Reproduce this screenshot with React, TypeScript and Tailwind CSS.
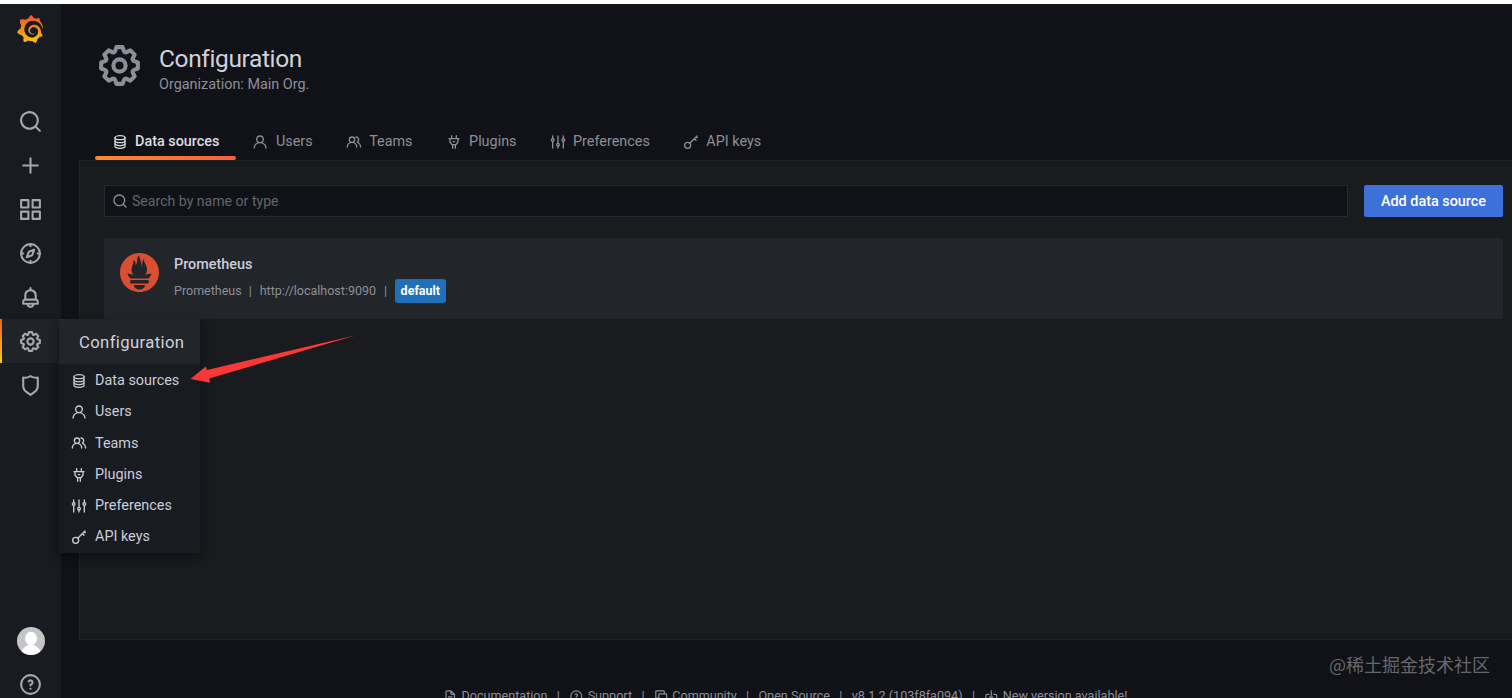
import type { ReactNode } from 'react';
import { SiGrafana, SiPrometheus } from 'react-icons/si';

type IconName =
  | 'search'
  | 'plus'
  | 'apps'
  | 'compass'
  | 'bell'
  | 'cog'
  | 'shield'
  | 'question'
  | 'database'
  | 'user'
  | 'users'
  | 'plug'
  | 'sliders'
  | 'key'
  | 'document'
  | 'comments'
  | 'update';

const icons: Record<IconName, ReactNode> = {
  search: (
    <path d="M21.71,20.29,18,16.61A9,9,0,1,0,16.61,18l3.68,3.68a1,1,0,0,0,1.42,0A1,1,0,0,0,21.71,20.29ZM11,18a7,7,0,1,1,7-7A7,7,0,0,1,11,18Z" />
  ),
  plus: <path d="M19,11H13V5a1,1,0,0,0-2,0v6H5a1,1,0,0,0,0,2h6v6a1,1,0,0,0,2,0V13h6a1,1,0,0,0,0-2Z" />,
  apps: (
    <path d="M10,13H3a1,1,0,0,0-1,1v7a1,1,0,0,0,1,1h7a1,1,0,0,0,1-1V14A1,1,0,0,0,10,13ZM9,20H4V15H9ZM21,2H14a1,1,0,0,0-1,1v7a1,1,0,0,0,1,1h7a1,1,0,0,0,1-1V3A1,1,0,0,0,21,2ZM20,9H15V4h5Zm1,4H14a1,1,0,0,0-1,1v7a1,1,0,0,0,1,1h7a1,1,0,0,0,1-1V14A1,1,0,0,0,21,13Zm-1,7H15V15h5ZM10,2H3A1,1,0,0,0,2,3v7a1,1,0,0,0,1,1h7a1,1,0,0,0,1-1V3A1,1,0,0,0,10,2ZM9,9H4V4H9Z" />
  ),
  compass: (
    <g fill="none" stroke="currentColor" strokeWidth="2" strokeLinecap="round" strokeLinejoin="round">
      <circle cx="12" cy="12" r="9" />
      <path d="M12 3v2M12 19v2M3 12h2M19 12h2" />
      <path d="M15.6 8.4l-2 5.2-5.2 2 2-5.2z" />
    </g>
  ),
  bell: (
    <path d="M18,13.18V10a6,6,0,0,0-5-5.91V3a1,1,0,0,0-2,0V4.09A6,6,0,0,0,6,10v3.18A3,3,0,0,0,4,16v2a1,1,0,0,0,1,1H8.14a4,4,0,0,0,7.72,0H19a1,1,0,0,0,1-1V16A3,3,0,0,0,18,13.18ZM8,10a4,4,0,0,1,8,0v3H8Zm4,10a2,2,0,0,1-1.72-1h3.44A2,2,0,0,1,12,20Zm6-3H6V16a1,1,0,0,1,1-1H17a1,1,0,0,1,1,1Z" />
  ),
  cog: (
    <path d="M21.32,9.55l-1.89-.63.89-1.78A1,1,0,0,0,20.13,6L18,3.87a1,1,0,0,0-1.15-.19l-1.78.89-.63-1.89A1,1,0,0,0,13.5,2h-3a1,1,0,0,0-.95.68L8.92,4.57,7.14,3.68A1,1,0,0,0,6,3.87L3.87,6a1,1,0,0,0-.19,1.15l.89,1.78-1.89.63A1,1,0,0,0,2,10.5v3a1,1,0,0,0,.68.95l1.89.63-.89,1.78A1,1,0,0,0,3.87,18L6,20.13a1,1,0,0,0,1.15.19l1.78-.89.63,1.89a1,1,0,0,0,.95.68h3a1,1,0,0,0,.95-.68l.63-1.89,1.78.89A1,1,0,0,0,18,20.13L20.13,18a1,1,0,0,0,.19-1.15l-.89-1.78,1.89-.63A1,1,0,0,0,22,13.5v-3A1,1,0,0,0,21.32,9.55ZM20,12.78l-1.2.4A2,2,0,0,0,17.64,16l.57,1.14-1.1,1.1L16,17.64a2,2,0,0,0-2.79,1.16l-.4,1.2H11.22l-.4-1.2A2,2,0,0,0,8,17.64l-1.14.57-1.1-1.1L6.36,16A2,2,0,0,0,5.2,13.18L4,12.78V11.22l1.2-.4A2,2,0,0,0,6.36,8L5.79,6.89l1.1-1.1L8,6.36A2,2,0,0,0,10.82,5.2l.4-1.2h1.56l.4,1.2A2,2,0,0,0,16,6.36l1.14-.57,1.1,1.1L17.64,8a2,2,0,0,0,1.16,2.79l1.2.4ZM12,8a4,4,0,1,0,4,4A4,4,0,0,0,12,8Zm0,6a2,2,0,1,1,2-2A2,2,0,0,1,12,14Z" />
  ),
  shield: (
    <path d="M19.63,3.65a1,1,0,0,0-.84-.2,8,8,0,0,1-6.22-1.27,1,1,0,0,0-1.14,0A8,8,0,0,1,5.21,3.45a1,1,0,0,0-.84.2A1,1,0,0,0,4,4.43v7.45a9,9,0,0,0,3.77,7.33l3.65,2.6a1,1,0,0,0,1.16,0l3.65-2.6A9,9,0,0,0,20,11.88V4.43A1,1,0,0,0,19.63,3.65ZM18,11.88a7,7,0,0,1-2.93,5.7L12,19.77,8.93,17.58A7,7,0,0,1,6,11.88V5.58a10,10,0,0,0,6-1.39,10,10,0,0,0,6,1.39Z" />
  ),
  question: (
    <path d="M11.29,15.29a1.58,1.58,0,0,0-.12.15.76.76,0,0,0-.09.18.64.64,0,0,0-.06.18,1.36,1.36,0,0,0,0,.2.84.84,0,0,0,.08.38.9.9,0,0,0,.54.54.94.94,0,0,0,.76,0,.9.9,0,0,0,.54-.54A1,1,0,0,0,13,16a1,1,0,0,0-.29-.71A1,1,0,0,0,11.29,15.29ZM12,2A10,10,0,1,0,22,12,10,10,0,0,0,12,2Zm0,18a8,8,0,1,1,8-8A8,8,0,0,1,12,20ZM12,7A3,3,0,0,0,9.4,8.5a1,1,0,1,0,1.73,1A1,1,0,0,1,12,9a1,1,0,0,1,0,2,1,1,0,0,0-1,1v1a1,1,0,0,0,2,0v-.18A3,3,0,0,0,12,7Z" />
  ),
  database: (
    <g fill="none" stroke="currentColor" strokeWidth="1.8" strokeLinecap="round">
      <ellipse cx="12" cy="5.5" rx="7.5" ry="3" />
      <path d="M4.5 5.5v13c0 1.6 3.3 3 7.5 3s7.5-1.4 7.5-3v-13" />
      <path d="M4.5 10c0 1.6 3.3 3 7.5 3s7.5-1.4 7.5-3M4.5 14.3c0 1.6 3.3 3 7.5 3s7.5-1.4 7.500-3" />
    </g>
  ),
  user: (
    <path d="M15.71,12.71a6,6,0,1,0-7.42,0,10,10,0,0,0-6.22,8.18,1,1,0,0,0,2,.22,8,8,0,0,1,15.9,0,1,1,0,0,0,1,.89h.11a1,1,0,0,0,.88-1.1A10,10,0,0,0,15.71,12.71ZM12,12a4,4,0,1,1,4-4A4,4,0,0,1,12,12Z" />
  ),
  users: (
    <path d="M12.3,12.22A4.92,4.92,0,0,0,14,8.5a5,5,0,0,0-10,0,4.92,4.92,0,0,0,1.7,3.72A8,8,0,0,0,1,19.5a1,1,0,0,0,2,0,6,6,0,0,1,12,0,1,1,0,0,0,2,0A8,8,0,0,0,12.3,12.22ZM9,11.5a3,3,0,1,1,3-3A3,3,0,0,1,9,11.5Zm9.74.32A5,5,0,0,0,15,3.5a1,1,0,0,0,0,2,3,3,0,0,1,3,3,3,3,0,0,1-1.5,2.59,1,1,0,0,0-.5.84,1,1,0,0,0,.45.86l.39.26.13.07a7,7,0,0,1,4,6.38,1,1,0,0,0,2,0A9,9,0,0,0,18.74,11.82Z" />
  ),
  plug: (
    <g fill="none" stroke="currentColor" strokeWidth="2" strokeLinecap="round" strokeLinejoin="round">
      <path d="M4.5 7h15M8.5 2.5V7M15.5 2.5V7M6 7v5l3 4h6l3-4V7M10 16v5.5M14 16v5.5M11 11.5h2" />
    </g>
  ),
  sliders: (
    <g fill="none" stroke="currentColor" strokeWidth="2" strokeLinecap="round">
      <path d="M4 3v4M4 11v10M12 3v11M12 18v3M20 3v4M20 11v10" />
      <circle cx="4" cy="9" r="2" />
      <circle cx="12" cy="16" r="2" />
      <circle cx="20" cy="9" r="2" />
    </g>
  ),
  key: (
    <g fill="none" stroke="currentColor" strokeWidth="2" strokeLinecap="round" strokeLinejoin="round">
      <circle cx="7" cy="17" r="4.5" />
      <path d="M10.2 13.8L21 3M17 7l2.5 2.5M20 4l1.5 1.5" />
    </g>
  ),
  document: (
    <path
      d="M13 3H7a2 2 0 00-2 2v14a2 2 0 002 2h10a2 2 0 002-2V9zM13 3v4a2 2 0 002 2h4M9 13h6M9 17h6"
      fill="none"
      stroke="currentColor"
      strokeWidth="2"
      strokeLinecap="round"
      strokeLinejoin="round"
    />
  ),
  comments: (
    <g fill="none" stroke="currentColor" strokeWidth="2" strokeLinecap="round" strokeLinejoin="round">
      <path d="M8 15H3V4a1 1 0 011-1h12a1 1 0 011 1v4" />
      <path d="M9 8h11a1 1 0 011 1v12l-3-3H9a1 1 0 01-1-1V9a1 1 0 011-1z" />
    </g>
  ),
  update: (
    <g fill="none" stroke="currentColor" strokeWidth="2" strokeLinecap="round" strokeLinejoin="round">
      <path d="M8 9H5a2 2 0 00-2 2v7M12 3v13M9 13l3 3 3-3M16 9h3a2 2 0 012 2v7" />
    </g>
  ),
};

function Icon({ name, className }: { name: IconName; className?: string }) {
  return (
    <svg viewBox="0 0 24 24" fill="currentColor" className={`shrink-0 ${className ?? ''}`}>
      {icons[name]}
    </svg>
  );
}

const sideItems: IconName[] = ['search', 'plus', 'apps', 'compass', 'bell', 'cog', 'shield'];

const configItems: { icon: IconName; label: string }[] = [
  { icon: 'database', label: 'Data sources' },
  { icon: 'user', label: 'Users' },
  { icon: 'users', label: 'Teams' },
  { icon: 'plug', label: 'Plugins' },
  { icon: 'sliders', label: 'Preferences' },
  { icon: 'key', label: 'API keys' },
];

const footerItems: { icon?: IconName; label: string }[] = [
  { icon: 'document', label: 'Documentation' },
  { icon: 'question', label: 'Support' },
  { icon: 'comments', label: 'Community' },
  { label: 'Open Source' },
  { label: 'v8.1.2 (103f8fa094)' },
  { icon: 'update', label: 'New version available!' },
];

function ConfigMenu() {
  return (
    <div className="absolute left-[59px] top-0 z-10 w-[141px] bg-[#181b1f] shadow-[0_4px_10px_2px_rgba(0,0,0,0.3)]">
      <div className="flex h-[45px] items-center bg-[#22252a] pt-px pl-5 text-[16.7px] tracking-[0.36px] text-[#d0d1dc]">
        Configuration
      </div>
      <ul className="pt-px">
        {configItems.map((item) => (
          <li key={item.label} className="flex h-[31.2px] items-center gap-2 pl-3 text-[#ccccdc]">
            <Icon name={item.icon} className="size-4" />
            <span className="whitespace-nowrap">{item.label}</span>
          </li>
        ))}
      </ul>
    </div>
  );
}

function Sidebar() {
  return (
    <nav className="relative z-10 flex w-[61px] shrink-0 flex-col items-center bg-[#181b1f] text-[#a6a7b0]">
      <svg width="0" height="0" className="absolute">
        <linearGradient id="grafana" x1="0" y1="0" x2="0" y2="1">
          <stop offset="0.1" stopColor="#f05a28" />
          <stop offset="1" stopColor="#fbca0a" />
        </linearGradient>
      </svg>
      <SiGrafana className="mt-[11px] mr-px size-7" fill="url(#grafana)" />
      <ul className="mt-[57px] w-full">
        {sideItems.map((name) => (
          <li
            key={name}
            className={`relative flex h-[43.9px] items-center justify-center ${name === 'cog' ? 'bg-[#202328]' : ''}`}
          >
            {name === 'cog' && (
              <span className="absolute inset-y-0 left-0 w-0.5 bg-linear-to-b from-[#f05a28] to-[#fbca0a]" />
            )}
            <Icon name={name} className="size-[25px]" />
            {name === 'cog' && <ConfigMenu />}
          </li>
        ))}
      </ul>
      <div className="mt-auto mb-px flex flex-col items-center gap-[17px]">
        <svg viewBox="0 0 28 28" className="size-7 rounded-full">
          <rect width="28" height="28" fill="#c5c5c5" />
          <ellipse cx="14" cy="11.5" rx="6" ry="6.8" fill="#fff" />
          <path d="M4 28c0-6 4-8 7-10h6c3 2 7 4 7 10z" fill="#fff" />
        </svg>
        <Icon name="question" className="size-[25px]" />
      </div>
    </nav>
  );
}

function PageHeader() {
  return (
    <header className="flex px-[34px] pt-[37px]">
      <Icon name="cog" className="size-[49px] text-[#8e8e99]" />
      <div className="ml-[15px] pt-px">
        <h1 className="text-[24.5px] leading-[34px] tracking-[-0.38px] text-[#d0d1dc]">Configuration</h1>
        <p className="leading-[17px] text-[#8e8e99]">Organization: Main Org.</p>
      </div>
    </header>
  );
}

function Tabs() {
  return (
    <div className="mt-[30px] flex h-[38px] pl-[34px]">
      {configItems.map((item, i) => (
        <div
          key={item.label}
          className={`relative flex items-center gap-[7.5px] px-[16.5px] pt-0.5 ${i === 0 ? 'font-medium text-[#dcdce6]' : 'text-[#8e8e99]'}`}
        >
          <Icon name={item.icon} className="size-4" />
          <span className="whitespace-nowrap">{item.label}</span>
          {i === 0 && (
            <span className="absolute inset-x-0 bottom-0 h-1 rounded-sm bg-linear-to-r from-[#ff8833] to-[#f55f3e]" />
          )}
        </div>
      ))}
    </div>
  );
}

function DataSourceCard() {
  return (
    <div className="mt-[21px] flex h-[81px] rounded-xs bg-[#22252a] pt-[15px] pl-4">
      <SiPrometheus className="size-[39px] shrink-0 text-[#da4e31]" />
      <div className="ml-[15px]">
        <h2 className="pt-0.5 leading-5 font-medium text-[#ccccdc]">Prometheus</h2>
        <div className="mt-1 flex h-6 items-center text-[12.5px] text-[#8e8e99]">
          <span>Prometheus</span>
          <span className="mr-2 ml-[7px]">|</span>
          <span>http://localhost:9090</span>
          <span className="mx-2">|</span>
          <span className="flex h-6 items-center rounded-[3px] bg-[#1f70b8] px-[5.5px] font-bold text-white">
            default
          </span>
        </div>
      </div>
    </div>
  );
}

export default function App() {
  return (
    <div className="relative flex h-[698px] w-[1512px] flex-col overflow-hidden bg-[#111217] font-['Roboto',sans-serif] text-[14.4px]">
      <div className="h-1 shrink-0 bg-white" />
      <div className="flex min-h-0 flex-1">
        <Sidebar />
        <main className="min-w-0 flex-1">
          <PageHeader />
          <div className="-mt-px">
            <Tabs />
          </div>
          <section className="ml-[18px] h-[480px] border border-r-0 border-[#222327] bg-[#1a1b1f] pt-6 pr-[9px] pl-6">
            <div className="flex gap-4">
              <div className="flex h-8 flex-1 items-center gap-1 border border-[#26282d] bg-[#111217] pl-[7px]">
                <Icon name="search" className="size-4 text-[#8e8e99]" />
                <span className="pt-px text-[14.1px] text-[#63646d]">Search by name or type</span>
              </div>
              <button className="h-8 w-[139px] rounded-xs bg-[#3d71d9] pt-0.5 font-medium text-white">
                Add data source
              </button>
            </div>
            <DataSourceCard />
          </section>
          <footer className="mt-[48px] flex h-4 items-center pl-[382px] text-[12.6px] text-[#8e8e99]">
            {footerItems.map((item, i) => (
              <div key={item.label} className="flex items-center whitespace-nowrap">
                {i > 0 && <span className="mx-[9.3px]">|</span>}
                {item.icon && <Icon name={item.icon} className="mr-1 size-[14.5px]" />}
                <span>{item.label}</span>
              </div>
            ))}
          </footer>
        </main>
      </div>

      {/* Pointer from the page to the "Data sources" menu entry */}
      <svg viewBox="0 0 166 48" className="absolute top-[335px] left-[190px] z-20 h-12 w-[166px]">
        <path d="M0.5 44L15.7 31.5 17 35 166 0.3 19.2 43.5 20 47.7z" fill="#fb3838" />
      </svg>
      <span className="absolute top-[651px] right-[22px] font-['Noto_Sans_CJK_SC',sans-serif] text-[18px] leading-[26px] text-[#66676b]">
        @稀土掘金技术社区
      </span>
    </div>
  );
}
